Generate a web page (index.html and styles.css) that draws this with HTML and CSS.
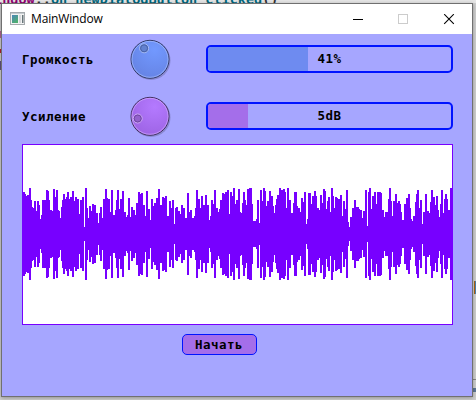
FILE: index.html
```html
<!DOCTYPE html>
<html lang="ru">
<head>
<meta charset="utf-8">
<title>MainWindow</title>
<link rel="stylesheet" href="styles.css">
</head>
<body>
<div class="editor"><span class="cls">indow</span>::<span class="fn">on_newDialogButton_clicked</span>()</div>
<i class="mark m1"></i><i class="mark m2"></i><i class="mark m3"></i><i class="mark m4"></i><i class="mark m5"></i><i class="mark m6"></i><i class="mark m7"></i>
<main class="window">
  <header class="titlebar">
    <svg class="appicon" width="16" height="14" viewBox="0 0 16 14">
      <defs><linearGradient id="ig" x1="0" y1="0" x2="0.6" y2="1"><stop offset="0" stop-color="#4a86b8"/><stop offset="1" stop-color="#4fae70"/></linearGradient></defs>
      <rect x=".5" y=".5" width="14" height="12" fill="#f2f2f2" stroke="#a5aaad"/>
      <path d="M1 1.5h13" stroke="#c5ccd0"/>
      <rect x="2" y="3" width="6" height="8" fill="url(#ig)"/>
      <rect x="9" y="3" width="2" height="8" fill="#d5d8da"/>
      <rect x="12" y="3" width="1.5" height="8" fill="#68767a"/>
    </svg>
    <span class="title">MainWindow</span>
    <svg class="controls" width="102" height="11" viewBox="0 0 102 11">
      <path d="M0 5.5h10" stroke="#000"/>
      <rect x="45.500" y=".5" width="9" height="9" fill="none" stroke="#ccc"/>
      <path d="M91.200 .2l9.600 9.600M100.800 .2l-9.600 9.600" stroke="#000" stroke-width="1.100"/>
    </svg>
  </header>
  <section class="content">
    <div class="row">
      <span class="label">Громкость</span>
      <svg class="dial" width="42" height="42" viewBox="0 0 42 42">
        <defs><radialGradient id="blue" cx=".62" cy=".25" r=".9"><stop offset="0" stop-color="#7299ff"/><stop offset="1" stop-color="#6480e0"/></radialGradient></defs>
        <circle cx="21" cy="21.500" r="19.500" fill="#000" opacity=".18"/>
        <circle cx="20" cy="20.300" r="19" fill="url(#blue)" stroke="#333a66"/>
        <circle cx="20" cy="20.300" r="18" fill="none" stroke="#a5bcff" opacity=".7"/>
        <circle cx="14.100" cy="9.300" r="4.500" fill="#5f7fcf" stroke="#a9bdf5"/>
        <circle cx="14.100" cy="9.300" r="3.500" fill="#6281cf" stroke="#4861a5"/>
      </svg>
      <div class="bar"><i class="fill volume"></i><b>41%</b></div>
    </div>
    <div class="row second">
      <span class="label">Усиление</span>
      <svg class="dial" width="42" height="42" viewBox="0 0 42 42">
        <defs><radialGradient id="violet" cx=".62" cy=".25" r=".9"><stop offset="0" stop-color="#b47aff"/><stop offset="1" stop-color="#9a60e0"/></radialGradient></defs>
        <circle cx="21" cy="21.500" r="19.500" fill="#000" opacity=".18"/>
        <circle cx="20" cy="20.300" r="19" fill="url(#violet)" stroke="#42305f"/>
        <circle cx="20" cy="20.300" r="18" fill="none" stroke="#cfa8ff" opacity=".7"/>
        <circle cx="7.700" cy="22.500" r="4.500" fill="#9360cf" stroke="#cfadf5"/>
        <circle cx="7.700" cy="22.500" r="3.500" fill="#9361cc" stroke="#7047a2"/>
      </svg>
      <div class="bar"><i class="fill gain"></i><b>5dB</b></div>
    </div>
    <div class="plot"><svg width="429" height="179" viewBox="23 145 429 179" shape-rendering="crispEdges"><path id="wave" fill="#7700ff"/></svg></div>
    <button class="start">Начать</button>
  </section>
</main>
<script src="wave.js"></script>
</body>
</html>
```
FILE: styles.css
```css
* { box-sizing: border-box; }
body {
  margin: 0;
  width: 476px;
  height: 400px;
  padding: 3px 3px 3px 1px;
  overflow: hidden;
  position: relative;
  background: #cfcfcf;
}
.editor {
  position: absolute;
  left: -6px;
  top: -10px;
  width: 490px;
  height: 13px;
  font: bold 13.500px/18px "DejaVu Sans Mono", monospace;
  white-space: pre;
  color: #333;
  background: #e6e6e6;
}
.cls { color: #900070; }
.fn { color: #00677c; }
.mark { position: absolute; }
.m1 { left: 0; top: 31px; width: 1px; height: 7px; background: #b06090; }
.m2 { left: 0; top: 49px; width: 1px; height: 4px; background: #b02030; }
.m3 { left: 0; top: 61px; width: 1px; height: 9px; background: #605080; }
.m4 { left: 474px; top: 281px; width: 1px; height: 13px; background: #b46414; }
.m5 { left: 475px; top: 281px; width: 1px; height: 13px; background: #4a80b0; }
.m6 { left: 473px; top: 379px; width: 3px; height: 1px; background: #888; }
.m7 { left: 473px; top: 388px; width: 3px; height: 4px; background: #607896; }
.window {
  position: relative;
  width: 472px;
  height: 394px;
  border: 1px solid #707070;
  background: #a6a6ff;
  box-shadow: 0 1px 4px rgba(0, 0, 0, .3);
}
.titlebar {
  display: flex;
  align-items: center;
  height: 30px;
  padding: 0 17px 0 8px;
  background: #fff;
}
.title {
  margin-left: 5px;
  font: 12px/16px "Open Sans", sans-serif;
  letter-spacing: -.15px;
  color: #000;
}
.controls { margin-left: auto; }
.content {
  display: flex;
  flex-direction: column;
  padding: 5px 19px 0 20px;
}
.row { display: flex; height: 42px; align-items: center; }
.second { margin-top: 15px; }
.label, .bar b, .start {
  font: bold 12.500px/16px "DejaVu Sans Mono", monospace;
  letter-spacing: .475px;
  color: #000;
}
.label { width: 108px; }
.dial { flex: none; }
.bar {
  display: grid;
  grid-template-columns: 100%;
  align-items: center;
  width: 247px;
  height: 28px;
  margin: -2px 0 0 34px;
  border: 2px solid #0014ff;
  border-radius: 5px;
  overflow: hidden;
}
.bar > * { grid-area: 1 / 1; }
.bar b { text-align: center; }
.fill { height: 24px; }
.volume { width: 100px; background: #6e8bf0; }
.gain { width: 40px; background: #a46eea; }
.plot {
  width: 431px;
  height: 181px;
  margin-top: 6px;
  border: 1px solid #7700ff;
  background: #fff;
}
.plot svg { display: block; }
.start {
  align-self: center;
  width: 75px;
  height: 21px;
  margin: 9px 0 0 -37px;
  padding: 0;
  border: 1px solid #0014ff;
  border-radius: 5px;
  background: #a46eea;
}
```
FILE: wave.js
```js
// Each segment: x offset, then pairs of [x, top] in thirds of a pixel.
const segments = [
  [0, "69:156 75:162 78:168 81:165 87:144 93:180 96:201 99:204 102:183 108:213 111:183 117:195 120:237 123:225 126:180 138:150 144:153 147:180 150:210 156:213 159:147 165:171 168:150 174:210 177:213 180:234 183:201 186:180 189:162 195:177 198:171 201:156 207:177 210:171 216:153 222:183 225:171 231:177 237:222 240:180 246:171 252:261 255:144 261:204 264:234 267:198 273:213 276:192 282:195 288:219 294:249 297:219 300:201 306:234 309:177 315:147 321:174 324:177 330:216 333:150 339:225 345:210 348:180 351:150 357:207 360:177 366:153 372:216 378:231 381:225 384:174 390:231 393:201 399:210 405:225 408:189 414:156 420:162 423:159 429:195 435:228 438:153 444:207 450:240 453:177 459:198 462:189 468:174 474:147"],
  [480, "0:195 6:171 12:174 15:168 21:228 27:183 33:204 36:180 42:252 45:204 48:201 54:213 60:222 63:195 69:204 75:234 81:159 87:216 90:210 96:234 102:228 105:204 108:150 114:177 120:204 123:168 129:195 135:165 141:195 147:240 150:228 153:180 159:192 162:150 168:204 174:216 177:207 180:180 186:159 192:162 195:156 201:150 207:222 210:156 216:168 219:144 225:192 228:180 234:147 240:216 243:219 246:189 249:156 255:180 258:195 261:147 267:144 276:192 279:243 288:237 291:180 297:249 300:150 306:183 309:144 315:153 318:198 321:183 327:153 333:168 339:198 342:219 345:195 348:177 351:165 357:144 363:150 369:147 375:156 378:204 381:144 387:180 393:219 399:189 402:156 411:198 414:204 420:216 423:174 429:186 432:156 438:252 441:237 444:159 453:192 456:168 462:153 468:168 471:204 477:210"],
  [960, "0:165 6:189 9:147 15:153 18:207 21:183 24:171 30:216 33:144 39:168 42:204 45:171 51:174 54:177 60:165 66:228 69:183 75:207 78:150 84:246 87:261 90:231 96:204 102:180 108:201 117:207 120:210 126:234 129:213 135:150 141:258 144:156 147:144 153:207 156:168 162:156 168:192 171:156 183:159 186:210 192:231 195:216 204:177 207:144 213:183 216:228 219:183 225:162 231:189 234:183 240:192 243:216 246:240 252:192 258:174 264:162 270:204 273:237 276:243 279:228 285:186 288:162 291:150 297:204 300:180 306:252 309:216 315:162 321:213 327:219 330:186 333:150 339:171 345:195 348:168 354:210 357:231 360:192 363:150 369:219 372:177 375:162 381:177 384:210 390:144 396:282"]
];
const steps = segments.flatMap(([dx, s]) =>
  s.split(" ").map(p => p.split(":").map(Number)).map(([x, t]) => [(x + dx) / 3, (282 - t) / 3]));
let d = "";
for (let i = 0; i < steps.length - 1; i++) {
  const [x, h] = steps[i];
  const w = steps[i + 1][0] - x;
  d += `M${x} ${234 - h}h${w}v${2 * h}h${-w}z`;
}
document.getElementById("wave").setAttribute("d", d);
```
